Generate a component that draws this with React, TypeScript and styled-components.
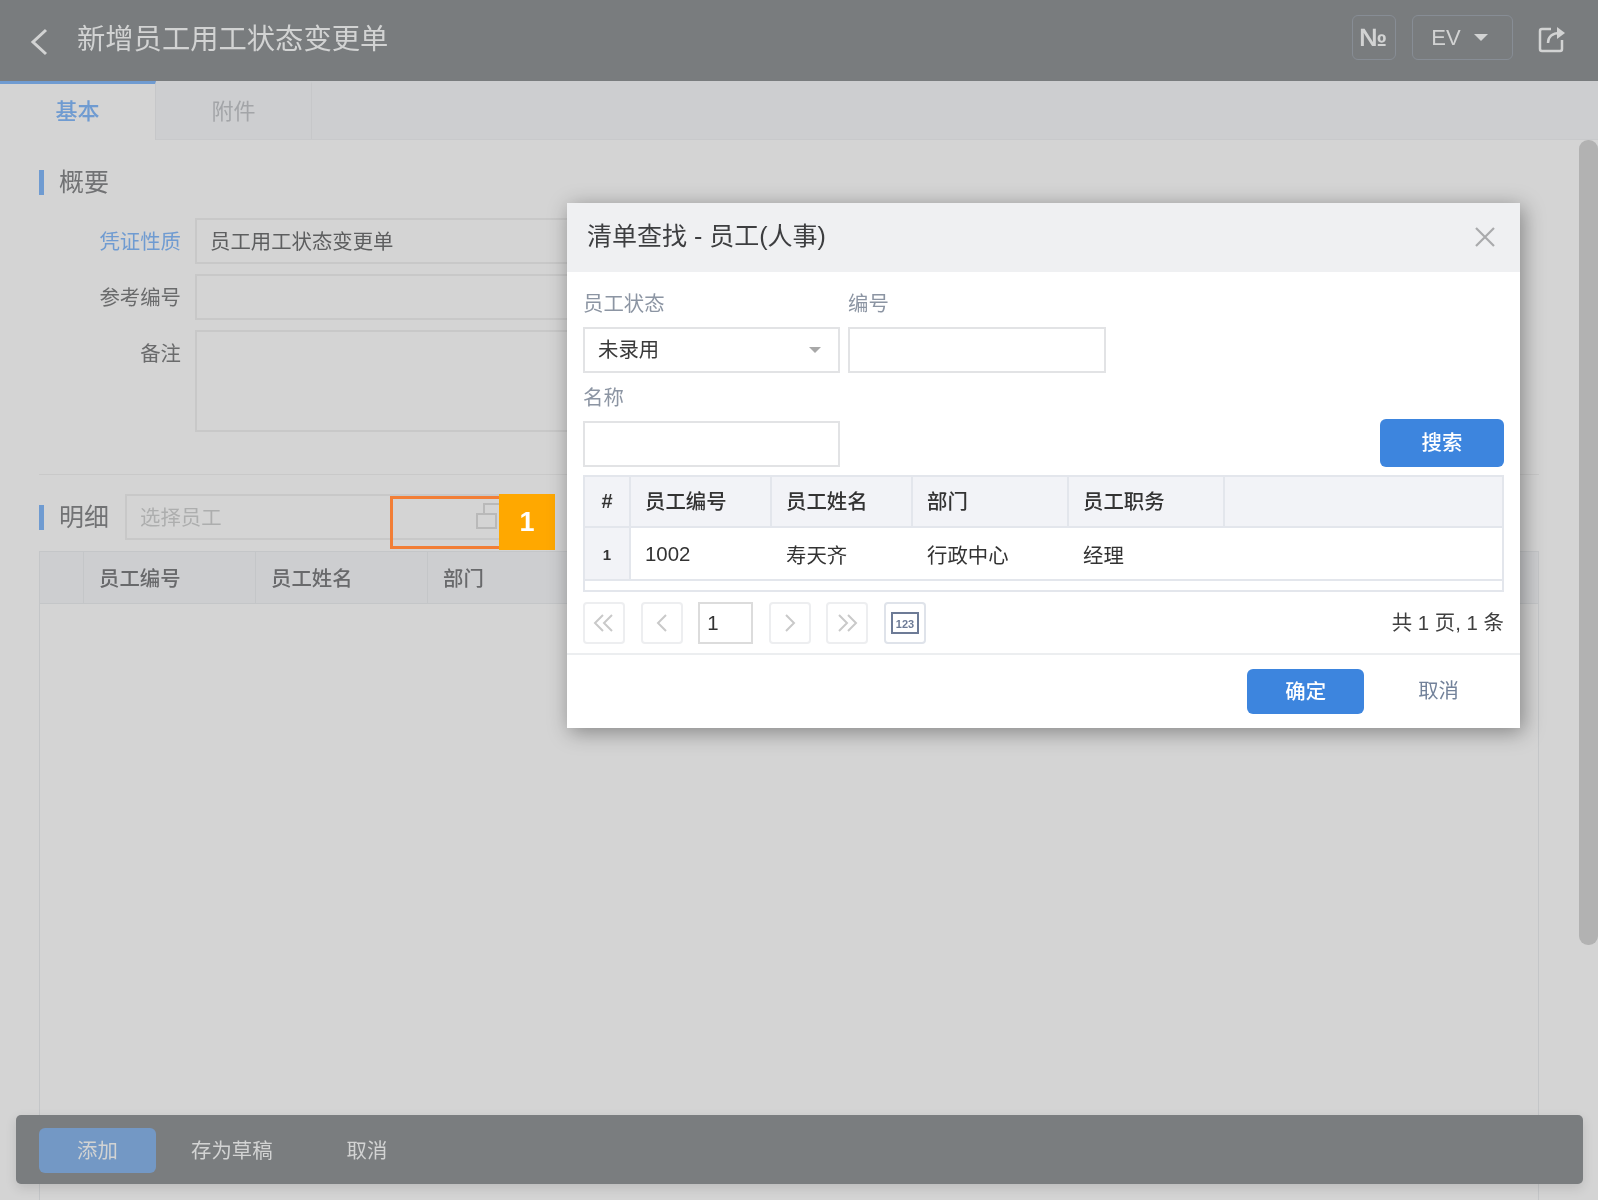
import styled, { createGlobalStyle } from 'styled-components';

const GlobalStyle = createGlobalStyle`
  html, body {
    margin: 0;
    padding: 0;
    background: #d4d4d4;
  }
  * {
    box-sizing: border-box;
  }
`;

const Page = styled.div`
  position: relative;
  width: 1598px;
  height: 1200px;
  overflow: hidden;
  display: flex;
  flex-direction: column;
  background: #d4d4d4;
  color: #6a6b6c;
  font-family: "Liberation Sans", "Noto Sans CJK SC", sans-serif;
  font-size: 20.4px;
  filter: blur(0.5px);
`;

const Header = styled.header`
  flex: none;
  height: 81px;
  display: flex;
  align-items: center;
  padding: 0 32px 0 30px;
  background: #797c7e;
  color: #d2d3d3;
`;

const BackIcon = styled.svg`
  width: 18px;
  height: 28px;
  margin: 2px 29px 0 0;
`;

const Title = styled.h1`
  flex: 1;
  margin: 0 0 8px;
  font-size: 28.3px;
  font-weight: 400;
`;

const HeaderButton = styled.div<{ $width: number }>`
  width: ${(p) => p.$width}px;
  height: 45px;
  margin: -6px 16px 0 0;
  display: flex;
  align-items: center;
  justify-content: center;
  gap: 13px;
  border: 1px solid #878d95;
  border-radius: 6px;
  font-size: 22px;
`;

const NumberSign = styled.span`
  margin-right: 2px;
  font-weight: 700;
  font-size: 25px;
`;

const Caret = styled.i`
  width: 0;
  height: 0;
  margin-right: 6px;
  border-left: 7px solid transparent;
  border-right: 7px solid transparent;
  border-top: 7px solid #d2d3d3;
`;

const ShareIcon = styled.svg`
  width: 28px;
  height: 28px;
  margin: -4px 0 0 9px;
`;

const Tabs = styled.nav`
  flex: none;
  height: 59px;
  display: flex;
  background: #cdced0;
  border-bottom: 1px solid #c8c9cb;
`;

const Tab = styled.div<{ $active?: boolean }>`
  width: 156px;
  display: flex;
  align-items: center;
  justify-content: center;
  padding-bottom: 6px;
  font-size: 22px;
  color: ${(p) => (p.$active ? '#6f9bd1' : '#a3a5a8')};
  background: ${(p) => (p.$active ? '#d4d4d4' : '#cdced0')};
  border-top: 3px solid ${(p) => (p.$active ? '#6f9bd1' : '#cdced0')};
  border-right: 1px solid #c6c7c9;
  margin-bottom: ${(p) => (p.$active ? '-1px' : '0')};
  font-weight: ${(p) => (p.$active ? 500 : 400)};
`;

const Content = styled.main`
  flex: 1;
  min-height: 0;
  display: flex;
  flex-direction: column;
  padding: 30px 59px 0 39px;
`;

const SectionTitle = styled.div`
  flex: none;
  display: flex;
  align-items: flex-start;
  gap: 15px;
  height: 25px;
  line-height: 24px;
  font-size: 25px;
  color: #717274;

  &::before {
    content: '';
    width: 5px;
    height: 25px;
    background: #6f9bd1;
  }
`;

const Form = styled.div`
  flex: none;
  margin-top: 23px;
  display: grid;
  grid-template-columns: 142px 900px;
  column-gap: 14px;
  row-gap: 10px;
`;

const FieldLabel = styled.label<{ $blue?: boolean }>`
  padding-top: 7px;
  text-align: right;
  color: ${(p) => (p.$blue ? '#6f9bd1' : '#6a6b6c')};
`;

const PageInput = styled.div<{ $height?: number }>`
  height: ${(p) => p.$height ?? 46}px;
  padding: 5px 13px;
  border: 2px solid #c8c8c8;
  color: #5d5e5f;
`;

const Divider = styled.div`
  flex: none;
  height: 1px;
  margin-top: 42px;
  background: #c9c9c9;
`;

const DetailRow = styled.div`
  flex: none;
  margin-top: 19px;
  display: flex;
  align-items: center;
  gap: 16px;
`;

const PickerInput = styled.div`
  position: relative;
  width: 385px;
  height: 46px;
  display: flex;
  align-items: center;
  justify-content: space-between;
  padding: 0 4px 2px 13px;
  border: 2px solid #c8c8c8;
  color: #adaeae;
`;

const Highlight = styled.div`
  position: absolute;
  left: 263px;
  top: 0;
  width: 120px;
  height: 53px;
  border: 3px solid #f27e36;
`;

const Badge = styled.div`
  position: absolute;
  left: 372px;
  top: -2px;
  width: 56px;
  height: 56px;
  display: flex;
  align-items: center;
  justify-content: center;
  background: #ffa800;
  color: #fff;
  font-size: 27px;
  font-weight: 700;
`;

const PageTable = styled.div`
  flex: 1;
  margin-top: 11px;
  border: 1px solid #c4c6c8;
  border-bottom: 0;
`;

const PageTableHead = styled.div`
  height: 52px;
  display: grid;
  grid-template-columns: 44px 172px 172px 1fr;
  background: #cdced0;
  border-bottom: 1px solid #c4c6c8;
`;

const PageTableCell = styled.div`
  display: flex;
  align-items: center;
  padding: 0 0 2px 15px;
  border-right: 1px solid #c4c6c8;
  color: #68696b;
  font-weight: 500;

  &:last-child {
    border-right: 0;
  }
`;

const Scrollbar = styled.div`
  position: absolute;
  right: 0;
  top: 140px;
  width: 19px;
  height: 805px;
  border-radius: 9px;
  background: #b2b2b2;
`;

const ActionBar = styled.footer`
  position: absolute;
  left: 16px;
  right: 15px;
  top: 1115px;
  height: 69px;
  display: flex;
  align-items: center;
  padding: 0 0 0 23px;
  border-radius: 5px;
  background: #7a7d7f;
  box-shadow: 0 4px 12px rgba(0, 0, 0, 0.12);
  color: #d2d3d3;
`;

const PrimaryAction = styled.div`
  width: 117px;
  height: 45px;
  margin-top: 2px;
  display: flex;
  align-items: center;
  justify-content: center;
  padding-bottom: 4px;
  margin-right: 35px;
  border-radius: 6px;
  background: #7398c5;
`;

const PlainAction = styled.div`
  margin: 0 74px 2px 0;
`;

const Dialog = styled.section`
  position: absolute;
  left: 567px;
  top: 203px;
  width: 953px;
  height: 525px;
  display: flex;
  flex-direction: column;
  background: #fff;
  color: #333;
  box-shadow: 3px 4px 20px rgba(0, 0, 0, 0.38);
`;

const DialogHead = styled.div`
  flex: none;
  height: 69px;
  display: flex;
  align-items: center;
  justify-content: space-between;
  padding: 0 24px 8px 20px;
  background: #eff0f2;
  font-size: 25px;
  color: #3d3e40;
`;

const CloseIcon = styled.svg`
  width: 22px;
  height: 22px;
  margin-top: 7px;
`;

const SearchForm = styled.div`
  flex: none;
  display: grid;
  grid-template-columns: 257px 258px 1fr;
  column-gap: 8px;
  padding: 20px 16px 0;
`;

const SearchLabel = styled.div`
  height: 24px;
  line-height: 24px;
  margin-bottom: 11px;
  color: #8c95a3;
`;

const SearchField = styled.div`
  height: 46px;
  margin-bottom: 13px;
  display: flex;
  align-items: center;
  justify-content: space-between;
  padding: 0 17px 4px 13px;
  border: 2px solid #e2e3e5;
  color: #3a3a3a;
`;

const SelectCaret = styled.i`
  width: 0;
  height: 0;
  margin-top: 4px;
  border-left: 6px solid transparent;
  border-right: 6px solid transparent;
  border-top: 6px solid #a8a8a8;
`;

const SearchButton = styled.div`
  justify-self: end;
  align-self: start;
  width: 124px;
  height: 48px;
  margin-top: -2px;
  display: flex;
  align-items: center;
  justify-content: center;
  padding-bottom: 4px;
  border-radius: 6px;
  background: #3d85de;
  color: #fff;
  font-weight: 500;
`;

const Results = styled.div`
  flex: none;
  margin: -5px 16px 0;
  border: 2px solid #e3e6ec;
`;

const ResultRow = styled.div<{ $head?: boolean }>`
  height: ${(p) => (p.$head ? 51 : 53)}px;
  display: grid;
  grid-template-columns: 46px 141px 141px 156px 156px 1fr;
  border-bottom: 2px solid #e3e6ec;
  background: ${(p) => (p.$head ? '#f2f3f7' : '#fff')};
  font-weight: ${(p) => (p.$head ? 500 : 400)};
`;

const ResultCell = styled.div<{ $head?: boolean }>`
  display: flex;
  align-items: center;
  padding: ${(p) => (p.$head ? '0 0 4px 14px' : '1px 0 0 14px')};
  border-right: 2px solid ${(p) => (p.$head ? '#e3e6ec' : 'transparent')};

  &:last-child {
    border-right: 0;
  }
`;

const IndexCell = styled.div<{ $small?: boolean }>`
  display: flex;
  align-items: center;
  justify-content: center;
  background: #f2f3f7;
  border-right: 2px solid #e3e6ec;
  padding-top: ${(p) => (p.$small ? 2 : 0)}px;
  font-size: ${(p) => (p.$small ? 15 : 20)}px;
  font-weight: 700;
`;

const ResultTail = styled.div`
  height: 9px;
`;

const Pager = styled.div`
  flex: none;
  height: 63px;
  display: flex;
  align-items: flex-start;
  gap: 15.6px;
  padding: 10px 16px 0;
  border-bottom: 2px solid #eceef0;
`;

const PagerButton = styled.div<{ $strong?: boolean }>`
  width: 42px;
  height: 42px;
  display: flex;
  align-items: center;
  justify-content: center;
  border: 2px solid ${(p) => (p.$strong ? '#dfe3ea' : '#edeef0')};
  border-radius: 4px;
`;

const PagerInput = styled.div`
  width: 55px;
  height: 42px;
  display: flex;
  align-items: center;
  padding-left: 7px;
  border: 2px solid #dcdcdc;
`;

const PagerInfo = styled.div`
  margin-left: auto;
  line-height: 42px;
  white-space: nowrap;
  color: #3f3f3f;
`;

const DialogFoot = styled.div`
  flex: 1;
  display: flex;
  align-items: center;
  padding: 0 61px 1px 0;
  justify-content: flex-end;
  gap: 54px;
`;

const ConfirmButton = styled.div`
  width: 117px;
  height: 45px;
  display: flex;
  align-items: center;
  justify-content: center;
  padding-bottom: 2px;
  border-radius: 6px;
  background: #3d85de;
  color: #fff;
  font-weight: 500;
`;

const CancelButton = styled.div`
  margin-bottom: 4px;
  color: #73829a;
`;

const Chevrons = ({ count, flip }: { count: number; flip?: boolean }) => (
  <svg width={count === 2 ? 22 : 12} height="20" viewBox={count === 2 ? '0 0 22 20' : '0 0 12 20'}
    style={flip ? { transform: 'scaleX(-1)' } : undefined}>
    <path d="M10 2 2 10l8 8" fill="none" stroke="#c9c9c9" strokeWidth="2" />
    {count === 2 && <path d="M19 2l-8 8 8 8" fill="none" stroke="#c9c9c9" strokeWidth="2" />}
  </svg>
);

const App = () => {
  return (
    <Page>
      <GlobalStyle />
      <Header>
        <BackIcon viewBox="0 0 18 28">
          <path d="M16 2 3 14l13 12" fill="none" stroke="#d2d3d3" strokeWidth="3" />
        </BackIcon>
        <Title>新增员工用工状态变更单</Title>
        <HeaderButton $width={44}><NumberSign>№</NumberSign></HeaderButton>
        <HeaderButton $width={101}>EV<Caret /></HeaderButton>
        <ShareIcon viewBox="0 0 28 28">
          <path d="M13 4H4a2 2 0 0 0-2 2v18a2 2 0 0 0 2 2h18a2 2 0 0 0 2-2v-9" fill="none" stroke="#d2d3d3" strokeWidth="2.5" />
          <path d="M10 18c0-6 4-10 12-10" fill="none" stroke="#d2d3d3" strokeWidth="2.5" />
          <path d="M19 2l8 6-8 6z" fill="#d2d3d3" />
        </ShareIcon>
      </Header>

      <Tabs>
        <Tab $active>基本</Tab>
        <Tab>附件</Tab>
      </Tabs>

      <Content>
        <SectionTitle>概要</SectionTitle>
        <Form>
          <FieldLabel $blue>凭证性质</FieldLabel>
          <PageInput>员工用工状态变更单</PageInput>
          <FieldLabel>参考编号</FieldLabel>
          <PageInput />
          <FieldLabel>备注</FieldLabel>
          <PageInput $height={102} />
        </Form>
        <Divider />
        <DetailRow>
          <SectionTitle>明细</SectionTitle>
          <PickerInput>
            选择员工
            <svg width="28" height="26" viewBox="0 0 28 26">
              <path d="M1 11h19v14H1zM8 11V1h20" fill="none" stroke="#b9b9b9" strokeWidth="2" />
            </svg>
            <Highlight />
            <Badge>1</Badge>
          </PickerInput>
        </DetailRow>
        <PageTable>
          <PageTableHead>
            <PageTableCell />
            <PageTableCell>员工编号</PageTableCell>
            <PageTableCell>员工姓名</PageTableCell>
            <PageTableCell>部门</PageTableCell>
          </PageTableHead>
        </PageTable>
      </Content>

      <Scrollbar />

      <ActionBar>
        <PrimaryAction>添加</PrimaryAction>
        <PlainAction>存为草稿</PlainAction>
        <PlainAction>取消</PlainAction>
      </ActionBar>

      <Dialog>
        <DialogHead>
          清单查找 - 员工(人事)
          <CloseIcon viewBox="0 0 22 22">
            <path d="M2 2l18 18M20 2 2 20" fill="none" stroke="#a9aaac" strokeWidth="2.2" />
          </CloseIcon>
        </DialogHead>
        <SearchForm>
          <SearchLabel>员工状态</SearchLabel>
          <SearchLabel>编号</SearchLabel>
          <span />
          <SearchField>未录用<SelectCaret /></SearchField>
          <SearchField />
          <span />
          <SearchLabel>名称</SearchLabel>
          <span />
          <span />
          <SearchField />
          <span />
          <SearchButton>搜索</SearchButton>
        </SearchForm>
        <Results>
          <ResultRow $head>
            <IndexCell>#</IndexCell>
            <ResultCell $head>员工编号</ResultCell>
            <ResultCell $head>员工姓名</ResultCell>
            <ResultCell $head>部门</ResultCell>
            <ResultCell $head>员工职务</ResultCell>
            <ResultCell />
          </ResultRow>
          <ResultRow>
            <IndexCell $small>1</IndexCell>
            <ResultCell>1002</ResultCell>
            <ResultCell>寿天齐</ResultCell>
            <ResultCell>行政中心</ResultCell>
            <ResultCell>经理</ResultCell>
            <ResultCell />
          </ResultRow>
          <ResultTail />
        </Results>
        <Pager>
          <PagerButton><Chevrons count={2} /></PagerButton>
          <PagerButton><Chevrons count={1} /></PagerButton>
          <PagerInput>1</PagerInput>
          <PagerButton><Chevrons count={1} flip /></PagerButton>
          <PagerButton><Chevrons count={2} flip /></PagerButton>
          <PagerButton $strong>
            <svg width="28" height="22" viewBox="0 0 28 22">
              <rect x="1" y="1" width="26" height="20" fill="none" stroke="#6d7b96" strokeWidth="2" />
              <text x="14" y="15.5" textAnchor="middle" fontSize="11" fontWeight="700" fill="#6d7b96">123</text>
            </svg>
          </PagerButton>
          <PagerInfo>共 1 页, 1 条</PagerInfo>
        </Pager>
        <DialogFoot>
          <ConfirmButton>确定</ConfirmButton>
          <CancelButton>取消</CancelButton>
        </DialogFoot>
      </Dialog>
    </Page>
  );
};

export default App;
